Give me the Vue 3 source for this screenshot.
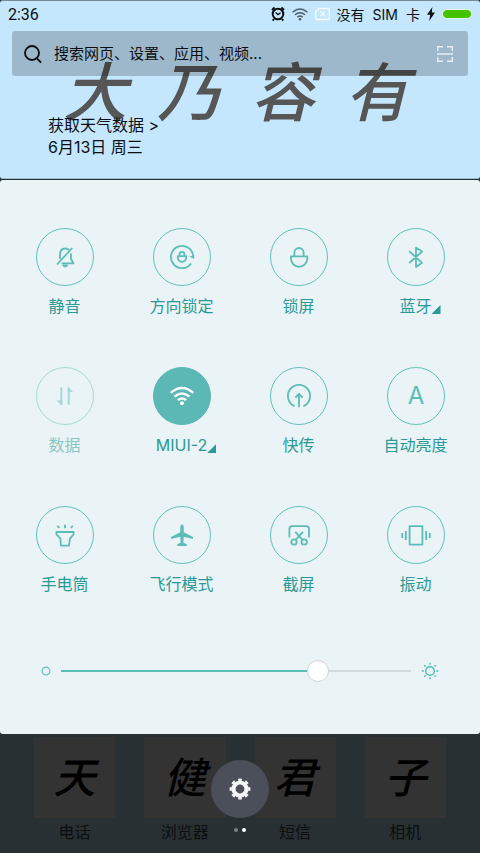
<script setup>
import { ref, computed } from 'vue'

const wallpaper = ['大', '乃', '容', '有']

const toggles = ref([
  { id: 'mute', label: '静音' },
  { id: 'rotate', label: '方向锁定' },
  { id: 'lock', label: '锁屏' },
  { id: 'bluetooth', label: '蓝牙', more: true },
  { id: 'data', label: '数据', disabled: true },
  { id: 'wifi', label: 'MIUI-2', more: true, on: true },
  { id: 'share', label: '快传' },
  { id: 'auto', label: '自动亮度' },
  { id: 'torch', label: '手电筒' },
  { id: 'plane', label: '飞行模式' },
  { id: 'shot', label: '截屏' },
  { id: 'vibrate', label: '振动' }
])

const apps = [
  { glyph: '天', name: '电话' },
  { glyph: '健', name: '浏览器' },
  { glyph: '君', name: '短信' },
  { glyph: '子', name: '相机' }
]

const brightness = ref(75)
const fill = computed(() => ({ '--fill': brightness.value + '%' }))

function toggle(t) {
  t.on = !t.on
}
</script>

<template>
  <main class="screen">
    <header class="top">
      <div class="wallpaper" aria-hidden="true">
        <span v-for="c in wallpaper" :key="c">{{ c }}</span>
      </div>

      <div class="status">
        <time class="clock">2:36</time>
        <svg width="14" height="16" viewBox="0 0 14 16" fill="none" stroke="#0b0f12" stroke-width="2">
          <circle cx="7" cy="8" r="5.3" />
          <path d="M1 4 3.6 1.6M13 4 10.4 1.6M3 13 1.8 14.6M11 13l1.2 1.6" />
          <path d="M4.6 6.6 7 8.6l2.6-1.8" stroke-width="1.3" />
        </svg>
        <svg width="16" height="16" viewBox="0 0 16 16" fill="none" stroke="#4d5b66" stroke-width="1.5">
          <path d="M.6 6.2q7.4-6.4 14.8 0M3 8.8q5-4.2 10 0M5.3 11.2q2.7-2.2 5.4 0" />
          <circle cx="8" cy="13.2" r="1.3" fill="#4d5b66" stroke="none" />
        </svg>
        <svg width="15" height="14" viewBox="0 0 15 14" fill="none" stroke="#f4fbff" stroke-width="1.3">
          <path d="M4 1.5h9.3q1 0 1 1v9q0 1-1 1H1.7q-1 0-1-1V4.8z" />
          <path d="m5.4 4.4 4.6 5M10 4.4l-4.6 5" />
        </svg>
        <span class="carrier"><span>没有</span><span>SIM</span><span>卡</span></span>
        <svg width="8" height="14" viewBox="0 0 8 14" fill="#0b0f12">
          <path d="M5.4 0 0 7.8h3.2L2.2 14 8 5.6H4.8z" />
        </svg>
        <span class="battery"></span>
      </div>

      <label class="search">
        <svg width="18" height="20" viewBox="0 0 18 20" fill="none" stroke="#0b0f12" stroke-width="1.8" stroke-linecap="round">
          <circle cx="8" cy="9" r="7" />
          <path d="m12.6 14.2 4 4" />
        </svg>
        <input type="text" placeholder="搜索网页、设置、应用、视频..." aria-label="搜索" />
        <svg width="16" height="16" viewBox="0 0 16 16" fill="none" stroke="#e6eef4" stroke-width="1.4">
          <path d="M.7 5V.7H6M10 .7h5.3V5M.7 11v4.3H6M10 15.3h5.3V11M0 8h16" />
        </svg>
      </label>

      <div class="weather">
        <a href="#">获取天气数据 &gt;</a>
        <span>6月13日 周三</span>
      </div>
    </header>

    <section class="panel">
      <div class="grid">
        <button
          v-for="t in toggles"
          :key="t.id"
          type="button"
          class="toggle"
          :class="{ 'is-on': t.on, 'is-off': t.disabled }"
          :disabled="t.disabled"
          :aria-pressed="t.on ? 'true' : 'false'"
          @click="toggle(t)"
        >
          <span class="circle">
            <svg class="icon" viewBox="0 0 28 28" aria-hidden="true">
              <g v-if="t.id === 'mute'">
                <path d="M9 16v-4c0-4 2-6.5 5.2-6.5 1.9 0 3.3.7 4.2 1.8M20 10.5V16l2.4 4.3H10.6" />
                <path d="M6 21.5 21.2 5" />
                <path d="M12.2 22.4h4l-2 1.2z" />
              </g>
              <g v-else-if="t.id === 'rotate'">
                <path d="M23.1 20.4A11.1 11.1 0 1 1 25.1 13" />
                <path class="solid" d="m21.6 13.4 4.6-1.4v4z" />
                <path d="M11.6 13v-1.8a2.4 2.4 0 0 1 4.8 0V13M9.8 13.2h8.4v1.4a4.2 4.2 0 0 1-8.4 0z" />
              </g>
              <g v-else-if="t.id === 'lock'">
                <path d="M9.4 13.4V9.6a4.6 4.6 0 0 1 9.2 0v3.8M5.9 13.4h16.4v2.2a8.2 8.2 0 0 1-16.4 0z" />
              </g>
              <g v-else-if="t.id === 'bluetooth'">
                <path d="m7.2 8.2 12.8 11.6-6 4.2V4.6l6 4L7.2 20" />
              </g>
              <g v-else-if="t.id === 'data'">
                <path d="M10.3 5.4v17.4M17.7 5.8v17" />
                <path class="solid" d="M11.2 23.6 5.6 18.4h5.6zM16.8 4.8l5.2 5h-5.2z" />
              </g>
              <g v-else-if="t.id === 'wifi'">
                <path stroke-width="2.4" d="M2.8 10.8q11.2-9.6 22.4 0M6.4 14.6q7.6-6.4 15.2 0M9.9 18.2q4.1-3.4 8.2 0" />
                <circle class="solid" cx="14" cy="21.2" r="1.9" />
              </g>
              <g v-else-if="t.id === 'share'">
                <path d="M9.6 24.1a11.1 11.1 0 1 1 8.8 0M14 25.2V12M10.4 15.6 14 11.8l3.6 3.8" />
              </g>
              <g v-else-if="t.id === 'auto'">
                <text class="letter" x="14" y="22">A</text>
              </g>
              <g v-else-if="t.id === 'torch'">
                <path d="M5.4 11h17.2v2.4L19 17.6 18 24.6h-8l-.6-7L5.4 13.4z" />
                <path d="M14 3.8v3.4M6.4 4.8l2 2.2M21.8 4.8 19.8 7" />
              </g>
              <g v-else-if="t.id === 'plane'">
                <path class="solid" d="M14 3.2q1.7.4 1.7 3v5L25 16v2l-9.3-2.2-.4 5.8 3.5 2v1.4H9.2v-1.4l3.5-2-.4-5.8L3 18v-2l9.3-4.8v-5q0-2.6 1.7-3z" />
              </g>
              <g v-else-if="t.id === 'shot'">
                <path d="M4.4 16.4V8q0-2.8 2.8-2.8h14q2.8 0 2.8 2.8v8.4" />
                <path d="m10.2 10.8 7.4 8M18 10.8l-7.4 8" />
                <circle cx="9" cy="21" r="2.7" />
                <circle cx="19.2" cy="21" r="2.7" />
              </g>
              <g v-else>
                <path d="M7.6 5.2h12.8v18.4H7.6zM3.8 10v9M.2 12v5M24.2 10v9M27.8 12v5" />
              </g>
            </svg>
          </span>
          <span class="label">{{ t.label }}<i v-if="t.more" class="corner"></i></span>
        </button>
      </div>

      <div class="brightness">
        <svg width="10" height="10" viewBox="0 0 10 10" fill="none" stroke="#6cc3bd" stroke-width="1.3">
          <circle cx="5" cy="5" r="3.8" />
        </svg>
        <input v-model="brightness" class="slider" type="range" min="0" max="100" aria-label="亮度" :style="fill" />
        <svg width="18" height="18" viewBox="0 0 18 18" fill="none" stroke="#4dbbb4" stroke-width="1.4">
          <circle cx="9" cy="9" r="4.3" />
          <path d="M9 .8v2M9 15.2v2M.8 9h2M15.2 9h2M3.2 3.2l1.3 1.3M13.5 13.5l1.3 1.3M14.8 3.2l-1.3 1.3M4.5 13.5l-1.3 1.3" />
        </svg>
      </div>
    </section>

    <footer class="dock">
      <div v-for="a in apps" :key="a.name" class="app">
        <span class="tile">{{ a.glyph }}</span>
        <span class="app-name">{{ a.name }}</span>
      </div>

      <div class="overlay">
        <button type="button" class="settings" aria-label="设置">
          <svg width="22" height="22" viewBox="0 0 22 22" fill="none" stroke="#f2f3f5">
            <circle cx="11" cy="11" r="6.5" stroke-width="4.2" />
            <circle cx="11" cy="11" r="9" stroke-width="2.8" pathLength="80" stroke-dasharray="5 5" stroke-dashoffset="2.5" />
          </svg>
        </button>
        <div class="dots"><i></i><i class="active"></i></div>
      </div>
    </footer>
  </main>
</template>

<style>
body { margin: 0; background: #283034; }
</style>

<style scoped>
.screen {
  min-height: 100vh;
  display: flex;
  flex-direction: column;
  gap: 1px;
  background: #283034;
  font-family: Inter, "Noto Sans CJK SC", sans-serif;
  font-size: 16px;
  color: #0b0f12;
}

.top {
  position: relative;
  box-sizing: border-box;
  padding-bottom: 20px;
  background: #c5e7fe;
  border-top: 1px solid #75899a;
  border-bottom: 1px solid #9fbdd0;
  border-radius: 3px;
}
.wallpaper {
  position: absolute;
  inset: 44px 56px auto 48px;
  display: grid;
  grid-template-columns: repeat(4, 1fr);
  text-align: center;
  font-size: 64px;
  line-height: 96px;
  font-weight: 500;
  font-style: italic;
  color: #565656;
}

.status {
  position: relative;
  display: flex;
  align-items: center;
  gap: 7px;
  height: 26px;
  padding: 0 8px;
}
.clock { margin-right: auto; font-family: Roboto, sans-serif; }
.carrier { display: flex; align-items: baseline; gap: 8px; font-size: 14px; }
.battery {
  box-sizing: border-box;
  width: 30px;
  height: 10px;
  border: 1px solid #e4f6e8;
  border-radius: 5px;
  background: #44c300;
}

.search {
  position: relative;
  display: flex;
  align-items: center;
  gap: 12px;
  height: 45px;
  margin: 4px 12px 0;
  padding: 0 15px 0 12px;
  border-radius: 3px;
  background: rgba(0, 0, 0, 0.2);
}
.search input {
  flex: 1;
  min-width: 0;
  padding: 0;
  border: 0;
  outline: 0;
  background: transparent;
  font: inherit;
  font-size: 15px;
  color: #0b0f12;
}
.search input::placeholder { color: #0b0f12; opacity: 1; }

.weather {
  position: relative;
  display: flex;
  flex-direction: column;
  align-items: flex-start;
  margin: 38px 48px 0;
  line-height: 22px;
}
.weather a { color: inherit; text-decoration: none; }

.panel {
  padding: 48px 0 52px;
  background: #eaf3f5;
  border-radius: 3px;
}
.grid {
  display: grid;
  grid-template-columns: repeat(4, 1fr);
  row-gap: 49px;
  padding: 0 6px;
}
.toggle {
  display: flex;
  flex-direction: column;
  align-items: center;
  gap: 8px;
  padding: 0;
  border: 0;
  background: none;
  font: inherit;
  color: #2b9a96;
  cursor: pointer;
}
.circle {
  box-sizing: border-box;
  display: flex;
  align-items: center;
  justify-content: center;
  width: 58px;
  height: 58px;
  border: 1px solid #62c1ba;
  border-radius: 50%;
  color: #5bbdb6;
}
.icon {
  width: 28px;
  height: 28px;
  overflow: visible;
  fill: none;
  stroke: currentColor;
  stroke-width: 1.8;
  stroke-linejoin: round;
}
.solid { fill: currentColor; stroke: none; }
.letter {
  fill: currentColor;
  stroke: none;
  font-size: 24px;
  text-anchor: middle;
}
.is-on .circle { background: #5bb8b4; border-color: #5bb8b4; color: #fff; }
.is-off { cursor: default; }
.is-off .circle, .is-off .label { opacity: 0.5; }
.label { position: relative; line-height: 24px; }
.corner {
  position: absolute;
  left: 100%;
  bottom: 4px;
  width: 9px;
  height: 9px;
  background: #2b9a96;
  clip-path: polygon(100% 0, 100% 100%, 0 100%);
}

.brightness {
  display: flex;
  align-items: center;
  gap: 10px;
  margin-top: 64px;
  padding: 0 41px;
}
.slider {
  -webkit-appearance: none;
  appearance: none;
  flex: 1;
  min-width: 0;
  height: 22px;
  margin: 0;
  background:
    linear-gradient(#5bbdb6, #5bbdb6) left center / var(--fill) 2px no-repeat,
    linear-gradient(#cfdadc, #cfdadc) left center / 100% 2px no-repeat;
}
.slider::-webkit-slider-thumb {
  -webkit-appearance: none;
  box-sizing: border-box;
  width: 22px;
  height: 22px;
  border: 1px solid #cdd5d7;
  border-radius: 50%;
  background: #fff;
}

.dock {
  position: relative;
  flex: 1;
  display: grid;
  grid-template-columns: repeat(4, 1fr);
  column-gap: 29px;
  padding: 2px 34px 8px;
}
.app { display: flex; flex-direction: column; gap: 2px; text-align: center; color: #0c0e0f; }
.tile {
  display: flex;
  align-items: center;
  justify-content: center;
  aspect-ratio: 1;
  background: #333;
  font-size: 42px;
  line-height: 1;
  font-weight: 500;
  font-style: italic;
  color: #000;
}
.app-name { line-height: 24px; }

.overlay {
  position: absolute;
  inset: 25px 0 auto;
  display: flex;
  flex-direction: column;
  align-items: center;
  gap: 10px;
  pointer-events: none;
}
.settings {
  display: flex;
  align-items: center;
  justify-content: center;
  width: 58px;
  height: 58px;
  padding: 0;
  border: 0;
  border-radius: 50%;
  background: #4b4f59;
  pointer-events: auto;
}
.dots { display: flex; gap: 4px; }
.dots i { width: 4px; height: 4px; border-radius: 50%; background: #7d8285; }
.dots .active { background: #fff; }
</style>
